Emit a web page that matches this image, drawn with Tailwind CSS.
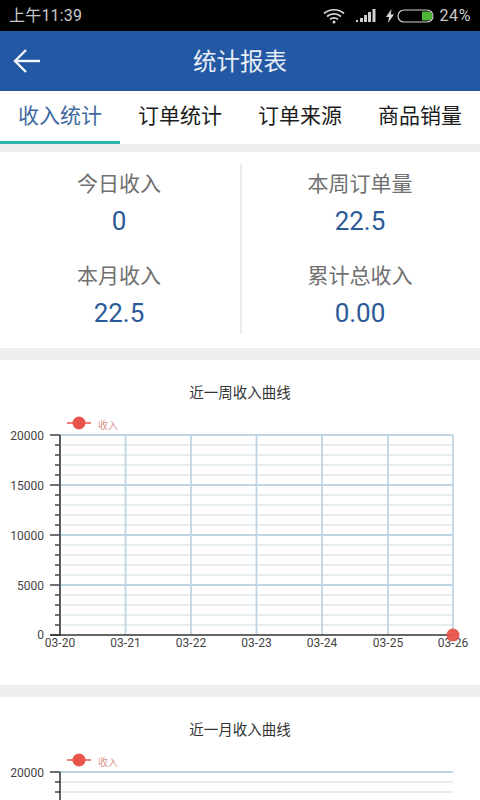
<!DOCTYPE html>
<html lang="en">
<head>
  <meta charset="UTF-8">
  <meta name="viewport" content="width=device-width, initial-scale=1.0">
  <title>统计报表</title>
  <script src="https://cdn.jsdelivr.net/npm/@tailwindcss/browser@4"></script>
</head>
<body class="w-[480px] h-[800px] overflow-hidden bg-[#eeeeee] font-['Roboto','Noto_Sans_CJK_SC',sans-serif]">

  <!-- status bar -->
  <div class="h-[31px] bg-black text-[#c9c9c9] flex items-center justify-between pl-[9px] pr-[9px]">
    <span class="text-[16px] tracking-[0.2px]">上午11:39</span>
    <div class="flex items-center">
      <svg class="w-[22px] h-[16px]" viewBox="0 0 22 16" fill="none" stroke="#d8d8d8" stroke-width="1.7">
        <path d="M1 5.5C6.500 .5 15.500 .5 21 5.500"/>
        <path d="M4 8.500C8 5 14 5 18 8.500"/>
        <path d="M7 11.300C9.500 9.500 12.500 9.500 15 11.300"/>
        <circle cx="11" cy="14" r="1.500" fill="#d8d8d8" stroke="none"/>
      </svg>
      <svg class="ml-[11px] w-[20px] h-[14px]" viewBox="0 0 20 14" fill="#d0d0d0">
        <rect x="0" y="11" width="2" height="2"/>
        <rect x="4" y="9" width="3" height="4"/>
        <rect x="8" y="6" width="3" height="7"/>
        <rect x="12" y="3" width="3" height="10"/>
        <rect x="16.500" y="0" width="3" height="13"/>
      </svg>
      <svg class="ml-[10px] w-[8px] h-[14px]" viewBox="0 0 8 14" fill="#d8d8d8">
        <path d="M5.500 0L0 8h3l-1 6 6-8.500H4.800z"/>
      </svg>
      <svg class="ml-[3px] w-[38px] h-[14px]" viewBox="0 0 38 14" fill="none">
        <rect x="1" y="1" width="35" height="12" rx="6" stroke="#d0d0d0" stroke-width="1.200"/>
        <path d="M25 2.500h6a4.500 4.500 0 0 1 0 9h-6z" fill="#4fb53a"/>
      </svg>
      <span class="ml-[4px] text-[16px] tracking-[0.6px]">24%</span>
    </div>
  </div>

  <!-- header -->
  <header class="relative h-[60px] pt-[4px] bg-[#2358a5] flex items-center justify-center">
    <svg class="absolute left-[13px] top-[17px] w-[28px] h-[26px]" viewBox="0 0 28 26" fill="none" stroke="#f4f6fa" stroke-width="2.400">
      <path d="M13 2L2 13l11 11"/>
      <path d="M2 13h25"/>
    </svg>
    <h1 class="text-[23.500px] text-[#e8eef6]">统计报表</h1>
  </header>

  <!-- tabs -->
  <nav class="h-[53px] bg-white grid grid-cols-4 text-[21px] text-[#1c1c1c]">
    <div class="flex items-center justify-center pt-[2px] border-b-[3px] border-[#2eb5b0] text-[#3f6a9e]">收入统计</div>
    <div class="flex items-center justify-center pt-[2px] border-b-[3px] border-transparent">订单统计</div>
    <div class="flex items-center justify-center pt-[2px] border-b-[3px] border-transparent">订单来源</div>
    <div class="flex items-center justify-center pt-[2px] border-b-[3px] border-transparent">商品销量</div>
  </nav>

  <!-- summary -->
  <section class="mt-[8px] h-[196px] bg-white py-[12px]">
    <div class="h-[170px] grid grid-cols-2 text-center">
      <div class="pr-[2px] pb-[4px] flex flex-col justify-between">
        <div>
          <p class="h-[40px] leading-[40px] text-[21px] text-[#707070]">今日收入</p>
          <p class="h-[34px] leading-[34px] text-[26px] text-[#2c5a98]">0</p>
        </div>
        <div>
          <p class="h-[40px] leading-[40px] text-[21px] text-[#707070]">本月收入</p>
          <p class="h-[34px] leading-[34px] text-[26px] text-[#2c5a98]">22.5</p>
        </div>
      </div>
      <div class="pr-[2px] pb-[4px] border-l-2 border-[#ececec] flex flex-col justify-between">
        <div>
          <p class="h-[40px] leading-[40px] text-[21px] text-[#707070]">本周订单量</p>
          <p class="h-[34px] leading-[34px] text-[26px] text-[#2c5a98]">22.5</p>
        </div>
        <div>
          <p class="h-[40px] leading-[40px] text-[21px] text-[#707070]">累计总收入</p>
          <p class="h-[34px] leading-[34px] text-[26px] text-[#2c5a98]">0.00</p>
        </div>
      </div>
    </div>
  </section>

  <!-- week chart -->
  <section class="mt-[12px] h-[325px] bg-white">
    <h2 class="pt-[24px] h-[53px] leading-[20px] text-center text-[14.500px] text-[#333333]">近一周收入曲线</h2>
    <svg class="chart block" width="480" height="272" viewBox="0 0 480 272">
      <g class="grid-lines"></g>
      <g class="legend">
        <line x1="67" y1="10" x2="91" y2="10" stroke="#e8534a" stroke-width="1.500"/>
        <circle cx="79" cy="10" r="6.500" fill="#e8534a"/>
        <text x="98" y="16" font-size="10" fill="#d9938b">收入</text>
      </g>
      <g font-size="12" fill="#444444" text-anchor="end">
        <text x="44" y="26.500">20000</text>
        <text x="44" y="76.500">15000</text>
        <text x="44" y="126.500">10000</text>
        <text x="44" y="176.500">5000</text>
        <text x="44" y="225.500">0</text>
      </g>
      <g font-size="12" fill="#444444" text-anchor="middle">
        <text x="60" y="234">03-20</text>
        <text x="125.500" y="234">03-21</text>
        <text x="191" y="234">03-22</text>
        <text x="256.500" y="234">03-23</text>
        <text x="322" y="234">03-24</text>
        <text x="388" y="234">03-25</text>
        <text x="453" y="234">03-26</text>
      </g>
      <circle cx="453" cy="222" r="6.500" fill="#e8534a" fill-opacity="0.950"/>
    </svg>
  </section>

  <!-- month chart -->
  <section class="mt-[12px] h-[325px] bg-white">
    <h2 class="pt-[24px] h-[53px] leading-[20px] text-center text-[14.500px] text-[#333333]">近一月收入曲线</h2>
    <svg class="chart block" width="480" height="272" viewBox="0 0 480 272">
      <g class="grid-lines"></g>
      <g class="legend">
        <line x1="67" y1="10" x2="91" y2="10" stroke="#e8534a" stroke-width="1.500"/>
        <circle cx="79" cy="10" r="6.500" fill="#e8534a"/>
        <text x="98" y="16" font-size="10" fill="#d9938b">收入</text>
      </g>
      <g font-size="12" fill="#444444" text-anchor="end">
        <text x="44" y="26.500">20000</text>
      </g>
    </svg>
  </section>

  <script>
    // gridlines and ticks are the same on both charts, y 22..222 and x 60..453
    var xs = [60, 125.5, 191, 256.5, 322, 388, 453];
    var NS = 'http://www.w3.org/2000/svg';

    function line(g, x1, y1, x2, y2, color, w) {
      var l = document.createElementNS(NS, 'line');
      l.setAttribute('x1', x1);
      l.setAttribute('y1', y1);
      l.setAttribute('x2', x2);
      l.setAttribute('y2', y2);
      l.setAttribute('stroke', color);
      l.setAttribute('stroke-width', w);
      g.appendChild(l);
    }

    document.querySelectorAll('.chart').forEach(function (svg, idx) {
      var g = svg.querySelector('.grid-lines');
      for (var i = 0; i <= 20; i++) {
        var y = 22 + i * 10;
        var major = i % 5 === 0;
        if (i < 20) line(g, 60, y, 453, y, major ? '#bfd5e3' : '#dfe8ee', major ? 1.8 : 1.5);
        line(g, major ? 50 : 55, y, 60, y, '#333333', 1.4);
      }
      if (idx === 0) {
        xs.forEach(function (x) { line(g, x, 22, x, 222, '#bfd5e3', 1.8); });
      }
      line(g, 60, 22, 60, 223, '#333333', 1.5);
      line(g, 50, 222, 453, 222, '#333333', 1.5);
    });
  </script>
</body>
</html>
